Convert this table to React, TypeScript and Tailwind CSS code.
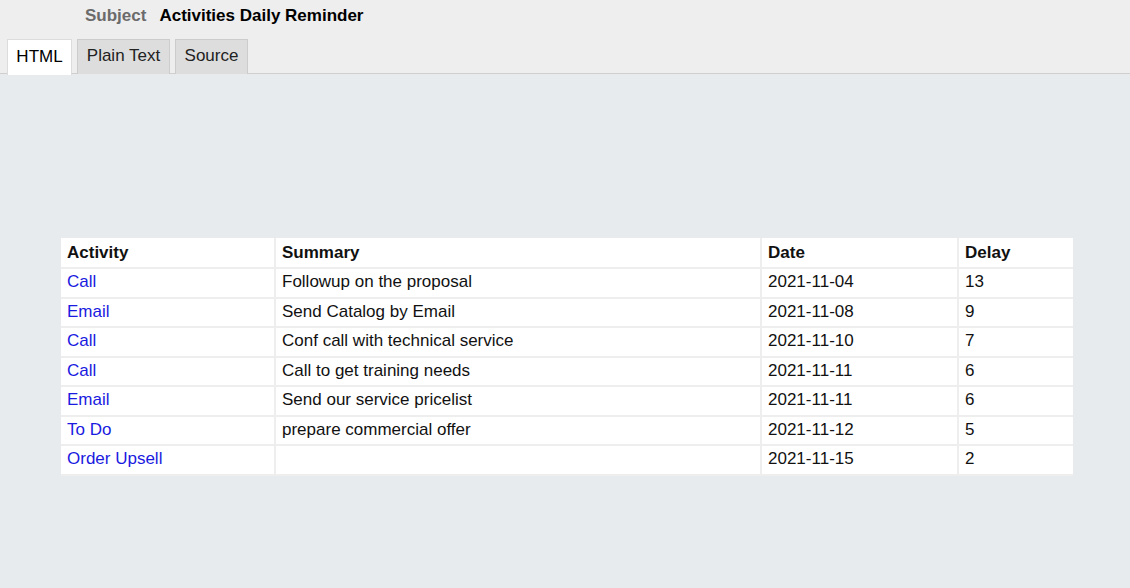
import React from "react";

const rows = [
  { activity: "Call", summary: "Followup on the proposal", date: "2021-11-04", delay: 13 },
  { activity: "Email", summary: "Send Catalog by Email", date: "2021-11-08", delay: 9 },
  { activity: "Call", summary: "Conf call with technical service", date: "2021-11-10", delay: 7 },
  { activity: "Call", summary: "Call to get training needs", date: "2021-11-11", delay: 6 },
  { activity: "Email", summary: "Send our service pricelist", date: "2021-11-11", delay: 6 },
  { activity: "To Do", summary: "prepare commercial offer", date: "2021-11-12", delay: 5 },
  { activity: "Order Upsell", summary: "", date: "2021-11-15", delay: 2 },
];

const App = () => {
  return (
    <div className="h-[588px] w-[1130px] bg-[#e8ebee] font-['Liberation_Sans',Arial,sans-serif] text-[#111]">
      {/* Header */}
      <div className="h-[74px] bg-[#eeeeee] border-b border-[#cfcfcf]">
        <div className="flex items-center h-[32px] pl-[85px] gap-[13px] text-[17px] font-bold">
          <span className="text-[#6b6b6b]">Subject</span>
          <span className="text-black">Activities Daily Reminder</span>
        </div>
        <div className="flex items-end gap-[5px] pl-[7px] pt-[6px] text-[17px]">
          <div className="h-[36px] w-[65px] bg-white border border-b-0 border-[#dcdcdc] flex items-center justify-center pb-[2px] text-black relative top-px">
            HTML
          </div>
          <div className="h-[35px] w-[93px] bg-[#dddddd] border border-b-0 border-[#cccccc] flex items-center justify-center pb-[2px] text-[#222]">
            Plain Text
          </div>
          <div className="h-[35px] w-[73px] bg-[#dddddd] border border-b-0 border-[#cccccc] flex items-center justify-center pb-[2px] text-[#222]">
            Source
          </div>
        </div>
      </div>

      {/* Body */}
      <div className="pt-[164px] pl-[61px]">
        <table className="w-[1012px] border-collapse bg-white text-[17px]">
          <thead>
            <tr className="h-[30px]">
              <th className="w-[214px] text-left font-bold px-[6px] border-r-2 border-b-2 border-[#eeeeee]">Activity</th>
              <th className="w-[486px] text-left font-bold px-[6px] border-r-2 border-b-2 border-[#eeeeee]">Summary</th>
              <th className="w-[197px] text-left font-bold px-[6px] border-r-2 border-b-2 border-[#eeeeee]">Date</th>
              <th className="text-left font-bold px-[6px] border-b-2 border-[#eeeeee]">Delay</th>
            </tr>
          </thead>
          <tbody>
            {rows.map((r, i) => (
              <tr key={i} className="h-[29.5px]">
                <td className="px-[6px] pb-[2px] border-r-2 border-b-2 border-[#eeeeee] text-[#1a1ae0]">{r.activity}</td>
                <td className="px-[6px] pb-[2px] border-r-2 border-b-2 border-[#eeeeee]">{r.summary}</td>
                <td className="px-[6px] pb-[2px] border-r-2 border-b-2 border-[#eeeeee]">{r.date}</td>
                <td className="px-[6px] pb-[2px] border-b-2 border-[#eeeeee]">{r.delay}</td>
              </tr>
            ))}
          </tbody>
        </table>
      </div>
    </div>
  );
};

export default App;
